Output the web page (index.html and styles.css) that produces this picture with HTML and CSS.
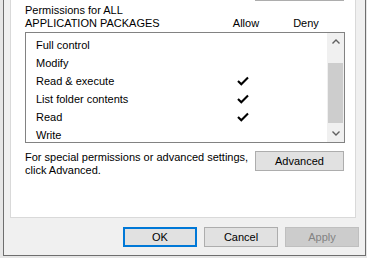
FILE: index.html
```html
<!DOCTYPE html>
<html lang="en">
<head>
  <meta charset="UTF-8">
  <title>Security</title>
  <link rel="stylesheet" href="styles.css">
</head>
<body>

  <div class="window">
    <div class="panel">
      <div class="edit-edge"></div>

      <div class="perm-head">
        <div class="perm-title">Permissions for ALL<br>APPLICATION PACKAGES</div>
        <span class="col-label">Allow</span>
        <span class="col-label">Deny</span>
      </div>

      <div class="listbox">
        <ul class="perm-list">
          <li class="perm-row"><span>Full control</span><span class="cell"></span></li>
          <li class="perm-row"><span>Modify</span><span class="cell"></span></li>
          <li class="perm-row"><span>Read &amp; execute</span><span class="cell"><svg class="check" viewBox="0 0 12 10"><path d="M1 5 L4.3 8.3 L11 1.6"/></svg></span></li>
          <li class="perm-row"><span>List folder contents</span><span class="cell"><svg class="check" viewBox="0 0 12 10"><path d="M1 5 L4.3 8.3 L11 1.6"/></svg></span></li>
          <li class="perm-row"><span>Read</span><span class="cell"><svg class="check" viewBox="0 0 12 10"><path d="M1 5 L4.3 8.3 L11 1.6"/></svg></span></li>
          <li class="perm-row"><span>Write</span><span class="cell"></span></li>
        </ul>
        <div class="scrollbar">
          <div class="scroll-btn">
            <svg class="arrow" viewBox="0 0 8 5"><path d="M0.5 4.5 L4 1 L7.5 4.5"/></svg>
          </div>
          <div class="scroll-track"><div class="scroll-thumb"></div></div>
          <div class="scroll-btn">
            <svg class="arrow" viewBox="0 0 8 5"><path d="M0.5 0.5 L4 4 L7.5 0.5"/></svg>
          </div>
        </div>
      </div>

      <div class="advanced-row">
        <p class="hint">For special permissions or advanced settings,<br>click Advanced.</p>
        <button class="btn btn-advanced">Advanced</button>
      </div>
    </div>

    <div class="dialog-buttons">
      <button class="btn btn-default">OK</button>
      <button class="btn">Cancel</button>
      <button class="btn" disabled>Apply</button>
    </div>
  </div>

</body>
</html>
```

FILE: styles.css
```css
body {
  margin: 0;
  background: #e6e6e6;
  font-family: 'Liberation Sans', Arial, sans-serif;
  font-size: 11px;
  color: #000;
  height: 258px;
  overflow: hidden;
}

.window {
  box-sizing: border-box;
  width: 363px;
  height: 256px;
  margin-left: 3px;
  background: #f0f0f0;
  border: 1px solid #6e6e6e;
  border-top: none;
}

/* Tab page */
.panel {
  box-sizing: border-box;
  width: 346px;
  height: 218px;
  margin-left: 6px;
  padding: 0 11px 0 14px;
  background: #fff;
  border: 1px solid #d9d9d9;
  border-top: none;
}

.edit-edge {
  width: 89px;
  height: 1px;
  margin-left: 230px;
  background: #adadad;
}

.perm-head {
  display: grid;
  grid-template-columns: 196px 50px 70px;
  padding-top: 3px;
  line-height: 13px;
}

.col-label {
  align-self: end;
  text-align: center;
}

/* Permission list */
.listbox {
  display: flex;
  box-sizing: border-box;
  width: 320px;
  height: 111px;
  margin-top: 2px;
  border: 1px solid #828282;
  overflow: hidden;
}

.perm-list {
  flex: 1;
  list-style: none;
  margin: 0;
  padding: 3px 0 0 10px;
}

.perm-row {
  display: grid;
  grid-template-columns: 185px 44px;
  height: 18px;
  line-height: 18px;
}

.cell {
  display: flex;
  align-items: center;
  justify-content: center;
}

.check {
  width: 12px;
  height: 10px;
  fill: none;
  stroke: #000;
  stroke-width: 2.1;
}

.scrollbar {
  display: flex;
  flex-direction: column;
  width: 17px;
  background: #f0f0f0;
}

.scroll-btn {
  display: flex;
  align-items: center;
  justify-content: center;
  height: 17px;
}

.arrow {
  width: 8px;
  height: 5px;
  fill: none;
  stroke: #606060;
  stroke-width: 1.4;
}

.scroll-track {
  flex: 1;
  padding-top: 13px;
}

.scroll-thumb {
  height: 60px;
  margin: 0 1px;
  background: #cdcdcd;
}

/* Advanced */
.advanced-row {
  display: flex;
  width: 319px;
  margin-top: 8px;
}

.hint {
  flex: 1;
  margin: 0;
  line-height: 13px;
  white-space: nowrap;
}

.btn {
  box-sizing: border-box;
  width: 74px;
  height: 20px;
  padding: 0;
  font-family: inherit;
  font-size: 11px;
  color: #000;
  background: #e1e1e1;
  border: 1px solid #adadad;
}

.btn-advanced {
  width: 89px;
}

.btn-default {
  border: 2px solid #0078d7;
}

.btn:disabled {
  color: #838383;
  background: #cccccc;
  border-color: #bfbfbf;
}

.dialog-buttons {
  display: flex;
  justify-content: flex-end;
  gap: 7px;
  margin-top: 9px;
  padding-right: 6px;
}
```
